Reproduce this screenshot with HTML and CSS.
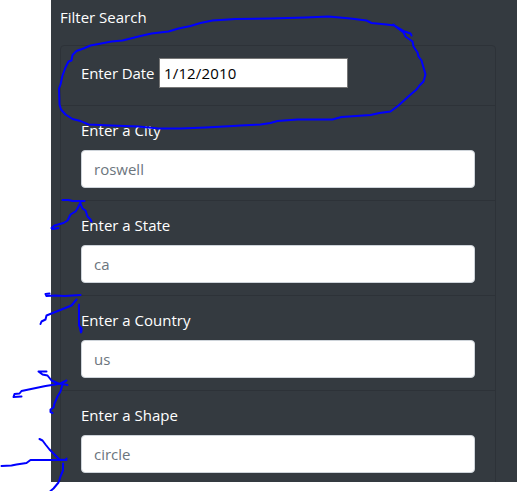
FILE: index.html
```html
<!DOCTYPE html>
<html lang="en">
<head>
<meta charset="utf-8">
<title>Filter Search</title>
<link rel="stylesheet" href="styles.css">
</head>
<body>
<aside class="panel">
  <p class="title">Filter Search</p>
  <form class="filters">
    <div class="item item-date">
      <label for="date">Enter Date</label>
      <input class="date" id="date" type="text" value="1/12/2010">
    </div>
    <div class="item">
      <label for="city">Enter a City</label>
      <input class="control" id="city" type="text" placeholder="roswell">
    </div>
    <div class="item">
      <label for="state">Enter a State</label>
      <input class="control" id="state" type="text" placeholder="ca">
    </div>
    <div class="item">
      <label for="country">Enter a Country</label>
      <input class="control" id="country" type="text" placeholder="us">
    </div>
    <div class="item">
      <label for="shape">Enter a Shape</label>
      <input class="control" id="shape" type="text" placeholder="circle">
    </div>
  </form>
</aside>
<svg class="ink" width="517" height="491" viewBox="-0.5 -0.500 517 491" aria-hidden="true">
  <path d="M411 35L410 33L404 31L394 25L386 24L371 22.500L366 20L350 18L328 16L305 17L270 18L235 18.500L212 20L200 22.500L190 25.500L178 28L168 31L151 33L140 35.500L128 38.500L122 40L111 41L98 43.500L90 45L83 48L76 50.500L72 54.500L71 60L68 61L65 67L62 75L60 84L58.500 88L59 104L60.500 109L65 114L72 118.500L80 120.500L88 124L110 125L138 126L158 128L180 128L205 127L240 125L260 124L270 122.500L277 120.500L297 119L332 119L341 116.500L370 114.500L379 112.500L390 111L398 105L409 95L416 89L419 85L423 81L425 74L423 67L421 60L418 56L417 52L413 46L412 41L405 36L403 32L395 26L393 24"/>
  <path d="M62 199.500H68L72 200.500H84M80 202L77 208L75 211L70 214L67 220L63 222.500L54 225L51 227.500L52 228.500L58 227.500M80 203L82 208L85 210L87 216L90 219L91 221"/>
  <path d="M49 293L45 293.500L46 295.500L55 295L64 295.500L80 294.500M76 299L71 305L61 309L51 313L46 315L45 319L41 321L40 323.500M78.500 304L78.500 325L81 328L81 331M79 326L80.500 332"/>
  <path d="M46 371H38L42 374L47 375L51 380L59 383.500L66 380M67 384.500L61 383L45 385.500L21 390.500L19 393L14 393.500L13 396.500L21 396M62 384L60 391L57 396L54 403L53 407L50 409L50 411.500L52 412.500"/>
  <path d="M39 438.500L42 440L45 444L49 449L53 453L59 459L65 459.500L66 458M1 465.500L11 465L16 464L26 462.500L30 459.500L66 459.500M62.500 463V470L60 476L58 482L53 488L50 490.500"/>
</svg>
</body>
</html>
```
FILE: styles.css
```css
* { box-sizing: border-box; }

body {
  margin: 0;
  height: 491px;
  overflow: hidden;
  background: #fff;
  font-family: "Segoe UI", "Open Sans", sans-serif;
  font-size: 15px;
  line-height: 24px;
  color: #fff;
}

.panel {
  margin-left: 51px;
  height: 482px;
  padding: 5px 21px 0 9px;
  overflow: hidden;
  background: #343a40;
}

.title { margin: 0 0 16px; }

.filters {
  border: 1px solid #2d3238;
  border-radius: 4px;
}

.item {
  height: 95px;
  padding: 12px 20px;
  border-top: 1px solid #2d3238;
}

.item-date {
  display: flex;
  align-items: center;
  gap: 4px;
  height: 59px;
  padding-bottom: 17px;
  border-top: 0;
}

.item label { display: block; height: 32px; white-space: nowrap; }
.item-date label { width: 74px; height: 24px; letter-spacing: -0.1px; }

input { font: inherit; }

.date {
  width: 189px;
  height: 30px;
  padding: 0 4px;
  border: 1px solid #767676;
  background: #fff;
  color: #000;
  letter-spacing: 0.15px;
}

.control {
  display: block;
  width: 100%;
  height: 38px;
  padding: 6px 12px;
  border: 1px solid #ced4da;
  border-radius: 4px;
  background: #fff;
}

.control::placeholder { color: #6c757d; opacity: 1; }

.ink {
  position: absolute;
  top: 0;
  left: 0;
  pointer-events: none;
  fill: none;
  stroke: #00f;
  stroke-width: 2;
  stroke-linecap: round;
  stroke-linejoin: round;
}
```
